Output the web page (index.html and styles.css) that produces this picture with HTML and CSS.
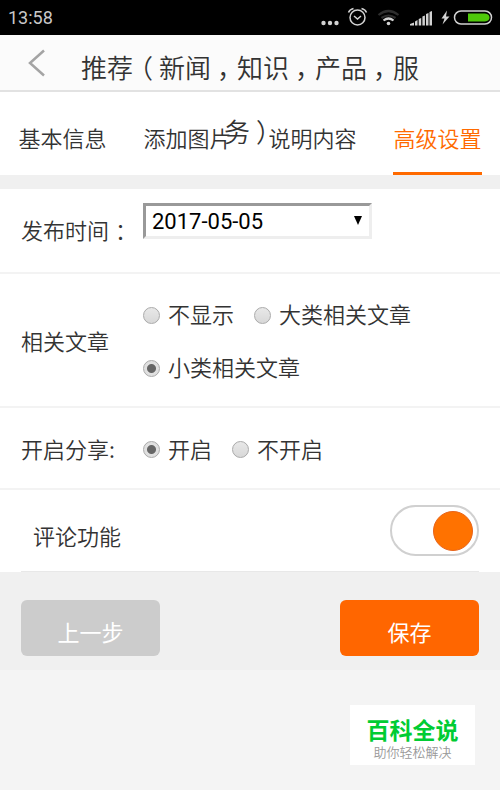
FILE: index.html
```html
<!DOCTYPE html>
<html lang="zh-CN">

<head>
    <meta charset="UTF-8">
    <meta name="viewport" content="width=device-width, initial-scale=1.0">
    <title>高级设置</title>
    <link rel="stylesheet" href="styles.css">
</head>

<body>
    <!-- 状态栏 -->
    <div class="status">
        <span class="time">13:58</span>
        <svg class="status_icons" width="174" height="24" viewBox="0 0 174 24">
            <g fill="#d2d2d2">
                <circle cx="3.500" cy="17" r="2.200" />
                <circle cx="10" cy="17" r="2.200" />
                <circle cx="16.500" cy="17" r="2.200" />
            </g>
            <g fill="none" stroke="#d2d2d2" stroke-width="1.500">
                <circle cx="37.500" cy="11.500" r="7.500" />
                <path d="M34 10L37.500 13L41 10M28.500 6.500Q29.500 3.500 33.500 2.500M46.500 6.500Q45.500 3.500 41.500 2.500" />
            </g>
            <g fill="none" stroke-width="2.200">
                <path d="M58.500 9Q68.500 1 78.500 9M61.500 12Q68.500 7 75.500 12" stroke="#2e2e2e" />
                <path d="M63.500 14.500Q68.500 10.500 73.500 14.500" stroke="#d2d2d2" />
            </g>
            <circle cx="68.500" cy="17.500" r="1.800" fill="#d2d2d2" />
            <path fill="#d2d2d2" d="M90 19.500V18L94 16.500V19.500ZM95 19.500V15.500L97.500 14V19.500ZM98.700 19.500V13L101.200 12V19.500ZM102.400 19.500V10.500L104.900 9.500V19.500ZM106 19.500V8L108.500 7V19.500ZM109.500 19.500V6L112 5V19.500Z" />
            <path fill="#d2d2d2" d="M127 4.500L121.500 12.500H124.500L122.500 18.500L129.500 10.500H126Z" />
            <rect x="134.500" y="5" width="37" height="13" rx="6.500" fill="none" stroke="#d2d2d2" stroke-width="1.500" />
            <path fill="#4fc80a" d="M148 7.500H165Q169.500 8 169.500 11.500T165 15.500H148Z" />
        </svg>
    </div>

    <!-- 标题 -->
    <header class="header">
        <a class="back" href="#" aria-label="返回">
            <svg width="20" height="30" viewBox="0 0 20 30">
                <path d="M17 2.500L3 15L17 27.500" fill="none" stroke="#a4a4a4" stroke-width="2.500" />
            </svg>
        </a>
        <h1 class="title">推荐<span class="open">（</span>新闻<span class="mid">，</span>知识<span class="mid">，</span>产品<span class="mid">，</span>服务<span class="mid">）</span></h1>
    </header>

    <nav class="tabs">
        <a href="#">基本信息</a>
        <a href="#">添加图片</a>
        <a href="#">说明内容</a>
        <a class="active" href="#">高级设置</a>
    </nav>

    <form class="form">
        <div class="row row_date">
            <label class="label" for="date">发布时间<span class="mid">：</span></label>
            <div class="select">
                <select id="date">
                    <option>2017-05-05</option>
                </select>
                <svg class="arrow" width="8" height="9" viewBox="0 0 8 9">
                    <path d="M0 0H8L4 9Z" />
                </svg>
            </div>
        </div>

        <div class="row row_related" role="radiogroup" aria-labelledby="related">
            <span class="label" id="related">相关文章</span>
            <div class="options">
                <label><input type="radio" name="related">不显示</label>
                <label><input type="radio" name="related">大类相关文章</label>
                <label><input type="radio" name="related" checked>小类相关文章</label>
            </div>
        </div>

        <div class="row row_share" role="radiogroup" aria-labelledby="share">
            <span class="label" id="share">开启分享:</span>
            <div class="options">
                <label><input type="radio" name="share" checked>开启</label>
                <label><input type="radio" name="share">不开启</label>
            </div>
        </div>

        <div class="row_comment">
            <label for="comment">评论功能</label>
            <input class="switch" type="checkbox" id="comment" checked>
        </div>

        <div class="btns">
            <button class="btn" type="button">上一步</button>
            <button class="btn btn_save" type="submit">保存</button>
        </div>
    </form>

    <div class="mark">
        <strong>百科全说</strong>
        <span>助你轻松解决</span>
    </div>
</body>

</html>
```

FILE: styles.css
```css
* {
    margin: 0;
    padding: 0;
    box-sizing: border-box;
}

body {
    font-family: "Noto Sans CJK SC", sans-serif;
    font-size: 22px;
    font-weight: 350;
    color: #333;
    background-color: #f4f4f4;
}

a {
    color: inherit;
    text-decoration: none;
}

/* 全角标点居中 */
.mid {
    margin: 0 -6px 0 6px;
}

.open {
    margin: 0 6px 0 -6px;
}

/* 状态栏 */
.status {
    display: flex;
    justify-content: space-between;
    align-items: center;
    height: 35px;
    padding: 0 6px 0 8px;
    background-color: #000;
}

.time {
    font-family: Roboto, sans-serif;
    font-size: 18px;
    font-weight: 400;
    color: #c8c8c8;
}

/* 标题，太长时会换行盖到选项卡上 */
.header {
    display: flex;
    height: 57px;
    background-color: #fbfbfb;
    border-bottom: 2px solid #e2e2e2;
}

.back {
    display: flex;
    align-items: center;
    width: 15%;
    padding-left: 27px;
}

.title {
    position: relative;
    z-index: 1;
    width: 70%;
    font-size: 26px;
    font-weight: 350;
    line-height: 64px;
    text-align: center;
    pointer-events: none;
}

/* 选项卡 */
.tabs {
    display: flex;
    justify-content: space-around;
    background-color: #fff;
    border-bottom: 14px solid #f0f0f0;
}

.tabs a {
    height: 83px;
    line-height: 90px;
}

.tabs .active {
    color: #ff6a00;
    border-bottom: 3px solid #ff6a00;
}

/* 表单 */
.form {
    background-color: #fff;
}

.row {
    display: flex;
    align-items: center;
    padding: 0 21px;
    border-bottom: 2px solid #f3f3f3;
}

.label {
    flex: none;
    width: 122px;
}

.row_date {
    align-items: flex-start;
    height: 85px;
    padding-top: 14px;
}

.row_date .label {
    line-height: 52px;
}

.select {
    position: relative;
    width: 50%;
}

.select select {
    appearance: none;
    display: block;
    width: 100%;
    height: 36px;
    padding: 0 6px;
    font-family: Roboto, sans-serif;
    font-size: 22px;
    color: #000;
    background-color: #fff;
    border: 3px solid;
    border-color: #999 #eee #eee #999;
    border-radius: 0;
}

.arrow {
    position: absolute;
    top: 13px;
    right: 10px;
    pointer-events: none;
}

.row_related {
    padding-top: 13px;
    padding-bottom: 13px;
}

.options {
    display: flex;
    flex-wrap: wrap;
    column-gap: 20px;
    line-height: 53px;
}

.options label {
    display: flex;
    align-items: center;
    gap: 8px;
}

.options input {
    appearance: none;
    width: 17px;
    height: 17px;
    margin-top: 3px;
    border: 1px solid #aaa;
    border-radius: 50%;
    background: linear-gradient(#e8e8e8, #d8d8d8);
}

.options input:checked {
    background: radial-gradient(circle, #666 4px, #e0e0e0 5px);
}

.row_share {
    height: 82px;
}

.row_comment {
    display: flex;
    justify-content: space-between;
    align-items: center;
    height: 82px;
    margin: 0 21px;
    padding-left: 12px;
    border-bottom: 1px solid #e8e8e8;
}

.row_comment label {
    padding-top: 8px;
}

.switch {
    appearance: none;
    display: flex;
    justify-content: flex-end;
    align-items: center;
    width: 89px;
    height: 51px;
    padding-right: 4px;
    border: 2px solid #d0d0d0;
    border-radius: 26px;
}

.switch::after {
    content: '';
    width: 38px;
    height: 38px;
    background-color: #ff7200;
    border: 1px solid #e8641a;
    border-radius: 50%;
}

/* 底部按钮 */
.btns {
    display: flex;
    justify-content: space-between;
    padding: 28px 21px 14px;
    background-color: #f0f0f0;
}

.btn {
    width: 139px;
    height: 56px;
    padding-top: 6px;
    font-family: inherit;
    font-size: 22px;
    color: #fff;
    background-color: #ccc;
    border: none;
    border-radius: 6px;
}

.btn_save {
    background-color: #ff6600;
}

.mark {
    display: flex;
    flex-direction: column;
    align-items: center;
    width: 125px;
    margin: 35px 25px 25px auto;
    padding: 10px 0 5px;
    background-color: #fff;
}

.mark strong {
    font-size: 23px;
    font-weight: 700;
    line-height: 28px;
    color: #0c3;
}

.mark span {
    font-size: 13px;
    line-height: 17px;
    color: #999;
}
```
